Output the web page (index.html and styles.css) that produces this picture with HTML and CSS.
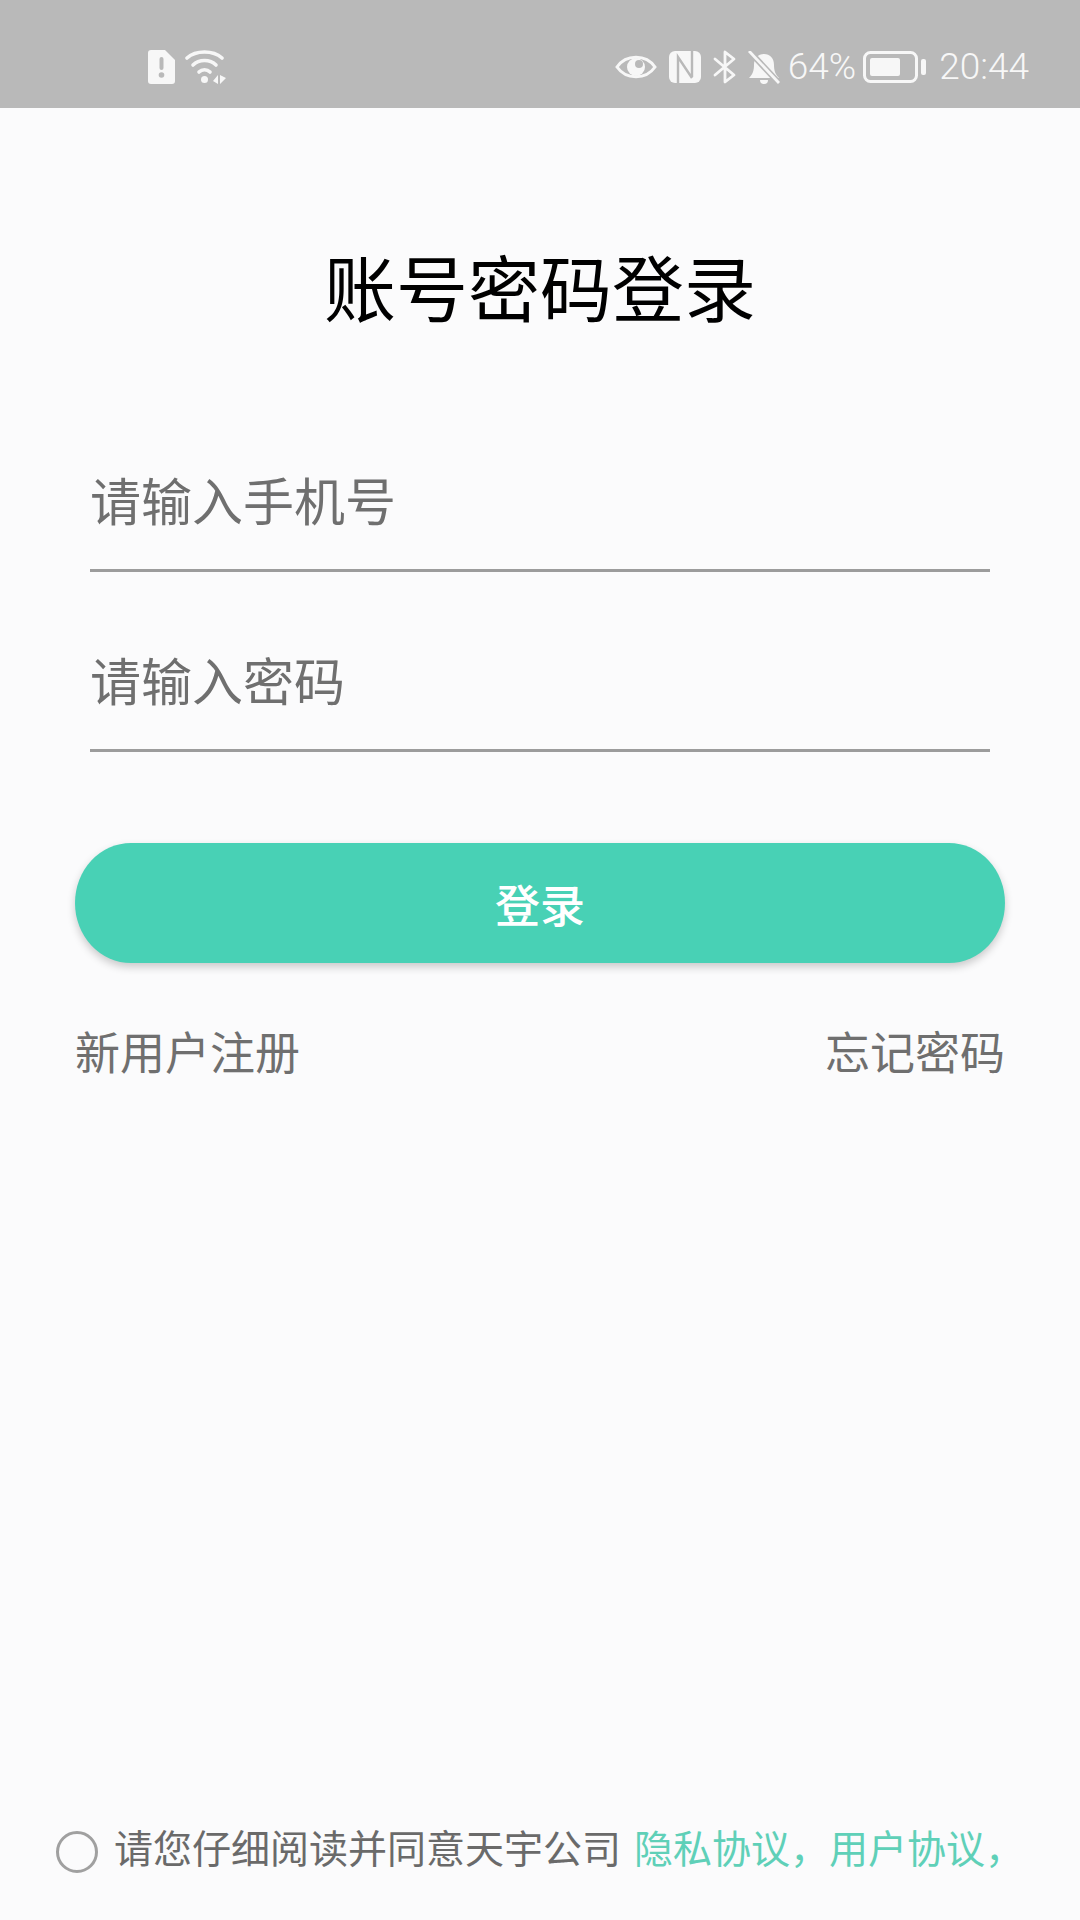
FILE: index.html
```html
<!DOCTYPE html>
<html>

<head>
    <meta charset="UTF-8">
    <title>账号密码登录</title>
    <link rel="stylesheet" href="styles.css">
</head>

<body>
    <div id="app">
        <div class="status-bar">
            <div class="status-left">
                <svg viewBox="0 0 27 34" width="27" height="34">
                    <path d="M3 0H17L27 10V31a3 3 0 0 1-3 3H3a3 3 0 0 1-3-3V3a3 3 0 0 1 3-3Z" fill="#f7f7f7"/>
                    <rect x="11.5" y="7" width="4" height="13" rx="2" fill="#b9b9b9"/>
                    <circle cx="13.5" cy="25" r="2.8" fill="#b9b9b9"/>
                </svg>
                <svg viewBox="0 0 42 34" width="42" height="34">
                    <g fill="none" stroke="#f7f7f7" stroke-width="3.6" stroke-linecap="round">
                        <path d="M2 8C11 0 28 0 37 8"/>
                        <path d="M8 15C14 9 25 9 31 15"/>
                        <path d="M14 22C17 19 22 19 25 22"/>
                    </g>
                    <circle cx="19.5" cy="29.5" r="3.5" fill="#f7f7f7"/>
                    <path d="M33 25V34L28 31ZM35 25L41 28L35 34Z" fill="#f7f7f7"/>
                </svg>
            </div>
            <div class="status-right">
                <svg class="icon-eye" viewBox="0 0 42 28" width="42" height="28">
                    <path d="M2 14C11 1 31 1 40 14C31 27 11 27 2 14Z" fill="none" stroke="#f7f7f7" stroke-width="3"/>
                    <circle cx="21" cy="14" r="9" fill="#f7f7f7"/>
                    <circle cx="24" cy="11" r="4" fill="#b9b9b9"/>
                </svg>
                <svg class="icon-nfc" viewBox="0 0 32 32" width="32" height="32">
                    <rect width="32" height="32" rx="6" fill="#f7f7f7"/>
                    <path d="M9 32V6L23 27M23 0V26" fill="none" stroke="#b9b9b9" stroke-width="2.4"/>
                </svg>
                <svg class="icon-bt" viewBox="0 0 23 34" width="23" height="34">
                    <path d="M2 9L21 25L12 32V2L21 9L2 25" fill="none" stroke="#f7f7f7" stroke-width="2.8" stroke-linejoin="round" stroke-linecap="round"/>
                </svg>
                <svg class="icon-bell" viewBox="0 0 32 33" width="32" height="33">
                    <path d="M1 27C5 23 6 19 6 14C6 7 10 3 16 3C22 3 26 7 26 14C26 19 27 23 31 27Z" fill="#f7f7f7"/>
                    <path d="M12 29a4 4 0 0 0 8 0Z" fill="#f7f7f7"/>
                    <path d="M1 0L31 32" stroke="#b9b9b9" stroke-width="6"/>
                    <path d="M1 0L31 32" stroke="#f7f7f7" stroke-width="2.8"/>
                </svg>
                <span class="status-text battery-text">64%</span>
                <svg class="icon-battery" viewBox="0 0 63 32" width="63" height="32">
                    <rect x="1.5" y="1.5" width="52" height="29" rx="6" fill="none" stroke="#f7f7f7" stroke-width="3"/>
                    <rect x="7" y="7" width="30" height="18" rx="2" fill="#f7f7f7"/>
                    <rect x="58" y="8" width="5" height="16" rx="2" fill="#f7f7f7"/>
                </svg>
                <span class="status-text time-text">20:44</span>
            </div>
        </div>

        <div class="content">
            <div class="title">账号密码登录</div>

            <div class="input-row first">请输入手机号</div>
            <div class="input-row second">请输入密码</div>

            <button class="login-btn">登录</button>

            <div class="link-row">
                <span>新用户注册</span>
                <span>忘记密码</span>
            </div>

            <div class="agree-row">
                <span class="radio"></span>
                <span class="agree-text">请您仔细阅读并同意天宇公司</span>
                <span class="agree-link">隐私协议，用户协议，</span>
            </div>
        </div>
    </div>
</body>

</html>
```

FILE: styles.css
```css
body {
    font-family: "Noto Sans CJK SC", "Liberation Sans", sans-serif;
    margin: 0;
    padding: 0;
    background-color: #fbfbfc;
}

#app {
    display: flex;
    flex-direction: column;
    height: 1920px;
    overflow: hidden;
}

.status-bar {
    display: flex;
    justify-content: space-between;
    align-items: center;
    height: 108px;
    padding: 26px 51px 0 148px;
    box-sizing: border-box;
    background-color: #b9b9b9;
}

.status-left,
.status-right {
    display: flex;
    align-items: center;
}

.status-left {
    gap: 10px;
}

.status-right {
    gap: 12px;
}

.status-text {
    font-family: "Roboto", sans-serif;
    font-weight: 300;
    font-size: 37px;
    color: #f7f7f7;
    line-height: 40px;
}

.battery-text {
    margin-left: -4px;
}

.icon-battery {
    margin-left: -5px;
}

.time-text {
    margin-left: 1px;
}

.content {
    flex: 1;
    display: flex;
    flex-direction: column;
}

.title {
    margin-top: 129px;
    font-size: 72px;
    line-height: 96px;
    text-align: center;
    color: #000;
}

.input-row {
    margin: 0 90px;
    font-size: 51px;
    line-height: 72px;
    padding: 0 0 34px;
    color: #6f6f6f;
    border-bottom: 3px solid #9c9c9c;
}

.input-row.first {
    margin-top: 130px;
}

.input-row.second {
    margin-top: 71px;
}

.login-btn {
    display: block;
    margin: 91px 75px 0;
    height: 120px;
    border: none;
    border-radius: 56px / 60px;
    background-color: #48d1b5;
    color: #fff;
    font-family: inherit;
    font-size: 45px;
    font-weight: 500;
    box-shadow: 0 4px 8px rgba(0, 0, 0, 0.2);
}

.link-row {
    display: flex;
    justify-content: space-between;
    margin: 56px 75px 0;
    font-size: 45px;
    line-height: 64px;
    color: #6f6f6f;
}

.agree-row {
    display: flex;
    align-items: center;
    margin-top: auto;
    margin-bottom: 46px;
    padding-left: 56px;
    font-size: 39px;
    line-height: 56px;
}

.radio {
    width: 36px;
    height: 36px;
    border: 3px solid #a0a0a0;
    border-radius: 50%;
    margin-right: 16px;
    margin-top: 11px;
}

.agree-text {
    color: #6a6a6a;
    margin-right: 13px;
}

.agree-link {
    color: #5fd0b8;
}
```
